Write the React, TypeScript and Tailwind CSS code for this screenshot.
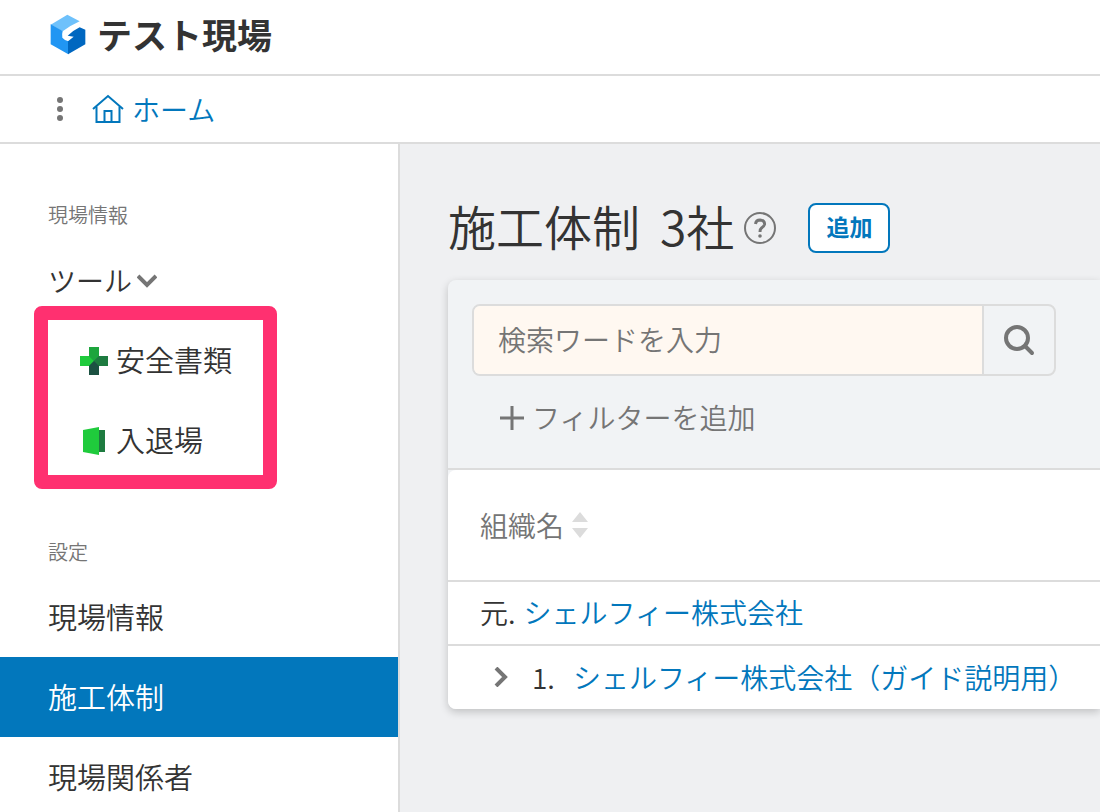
import type { ReactNode } from "react";

function Logo() {
    return (
        <svg viewBox="60 40 108 123" className="w-9 h-[41px]" aria-hidden="true">
            <path d="M62 72 L112 42 L149 62 Q122 74 98 92 Z" fill="#6ec1fb" />
            <path d="M62 71 L98 91 Q95 102 97 111 Q104 119 115 122 V161 L62 131 Z" fill="#2196f3" />
            <path d="M113 105 Q130 89 149 80 L166 87 V131 L114 161 V122 L131 108 Z" fill="#0067c0" />
        </svg>
    );
}

function HomeIcon() {
    return (
        <svg viewBox="0 0 32 30" className="w-8 h-[30px]" fill="none" stroke="currentColor" strokeWidth="2" aria-hidden="true">
            <path d="M1 15 L16 2 L31 15" />
            <path d="M4.500 12.500 V28 H27.500 V12.500" />
            <path d="M12.500 28 V17 H19.500 V28" />
        </svg>
    );
}

function SafetyIcon() {
    return (
        <svg viewBox="0 0 28 28" className="w-7 h-7" aria-hidden="true">
            <path d="M9 9 H19 V19 H9 Z" fill="#1e7b40" />
            <path d="M9 0 H19 V9 L14 14 L9 9 Z" fill="#1da53d" />
            <path d="M0 9 H9 L14 14 L9 19 H0 Z" fill="#1fcb3c" />
            <path d="M28 9 H19 L14 14 L19 19 H28 Z" fill="#1e7b40" />
            <path d="M9 28 V19 L14 14 L19 19 V28 Z" fill="#1c5142" />
        </svg>
    );
}

function GateIcon() {
    return (
        <svg viewBox="0 0 28 28" className="w-7 h-7" aria-hidden="true">
            <path d="M19 3 H25 V25 H19 Z" fill="#1e7b40" />
            <path d="M3 3 L19 0 V28 L3 25 Z" fill="#1fcb3c" />
        </svg>
    );
}

function Chevron({ className }: { className: string }) {
    return (
        <svg viewBox="0 0 20 20" className={className} fill="none" stroke="#757575" strokeWidth="4" aria-hidden="true">
            <path d="M1 6 L10 15 L19 6" />
        </svg>
    );
}

function SideLink({ children, active }: { children: ReactNode; active?: boolean }) {
    return (
        <a
            href="#"
            className={
                active
                    ? "flex items-center h-20 px-12 text-[29px] bg-[#0277bc] text-white"
                    : "flex items-center h-20 px-12 text-[29px]"
            }
        >
            {children}
        </a>
    );
}

export default function App() {
    return (
        <div className="min-h-screen flex flex-col overflow-x-hidden bg-white text-[#333] font-[350] font-['Noto_Sans_CJK_JP',sans-serif]">
            <header className="flex items-center gap-[11px] h-19 px-[50px] pb-1.5 border-b-2 border-[#dcdcdc]">
                <Logo />
                <span className="pb-0.5 text-[35px] leading-none font-bold">テスト現場</span>
            </header>
            <nav className="flex items-center gap-[22px] h-17 px-[50px] border-b-2 border-[#dcdcdc]">
                <button aria-label="メニュー">
                    <svg viewBox="0 0 20 26" className="w-5 h-[26px]" fill="#757575" aria-hidden="true">
                        <circle cx="10" cy="4" r="3" />
                        <circle cx="10" cy="13" r="3" />
                        <circle cx="10" cy="22" r="3" />
                    </svg>
                </button>
                <a href="#" className="flex items-center gap-2 text-[28px] leading-none text-[#0277bc]">
                    <HomeIcon />
                    ホーム
                </a>
            </nav>

            <div className="flex flex-1">
                <aside className="w-100 shrink-0 border-r-2 border-[#dcdcdc] pt-12">
                    <h2 className="flex items-center h-12 px-12 pb-0.5 text-xl text-[#757575]">現場情報</h2>
                    <button className="flex items-center gap-[5px] h-20 px-12 text-[28px]">
                        ツール
                        <Chevron className="w-5 h-5" />
                    </button>
                    <div className="relative pt-px">
                        <a href="#" className="flex items-center gap-2 h-20 px-20 text-[29px]">
                            <SafetyIcon />
                            <span className="pb-0.5">安全書類</span>
                        </a>
                        <a href="#" className="flex items-center gap-2 h-20 px-20 text-[29px]">
                            <GateIcon />
                            <span className="pb-0.5">入退場</span>
                        </a>
                        <div className="absolute -top-[14px] left-[34px] w-[243px] h-[183px] border-14 border-[#ff3070] rounded-lg pointer-events-none" />
                    </div>
                    <h2 className="flex items-center h-12 mt-12 px-12 pb-0.5 text-xl text-[#757575]">設定</h2>
                    <SideLink>現場情報</SideLink>
                    <SideLink active>施工体制</SideLink>
                    <SideLink>現場関係者</SideLink>
                </aside>

                <main className="flex-1 min-w-0 bg-[#eff0f2] pl-12 pt-12">
                    <div className="flex items-center h-18">
                        <h1 className="flex gap-5 pb-1.5 text-5xl">
                            <span>施工体制</span>
                            <span>3社</span>
                        </h1>
                        <svg viewBox="0 0 32 32" className="w-8 h-8 ml-2.5" fill="none" stroke="#757575" aria-hidden="true">
                            <circle cx="16" cy="16" r="15" strokeWidth="2" />
                            <path d="M11.500 12 Q12 8 16 8 Q21 8.500 20.500 12.500 Q20 14.500 17.500 16 Q16 17 16 20" strokeWidth="3" />
                            <circle cx="16" cy="24" r="1.800" fill="#757575" stroke="none" />
                        </svg>
                        <button className="ml-8 h-[50px] px-4 pb-1 bg-white border-2 border-[#0277bc] rounded-lg text-[23px] leading-none font-bold text-[#0277bc]">
                            追加
                        </button>
                    </div>

                    <section className="mt-4 rounded-l-lg bg-[#f1f3f5] shadow-[0_3px_8px_rgba(0,0,0,0.2)]">
                        <div className="h-[190px] px-6 pt-6 border-b-2 border-[#dcdcdc]">
                            <form className="flex h-18 max-w-[584px] border-2 border-[#dcdcdc] rounded-lg overflow-hidden">
                                <input
                                    type="text"
                                    aria-label="検索ワード"
                                    placeholder="検索ワードを入力"
                                    className="flex-1 min-w-0 px-6 pb-0.5 bg-[#fff8f1] text-[28px] placeholder:text-[#757575]"
                                />
                                <button type="button" aria-label="検索" className="w-18 border-l-2 border-[#dcdcdc] flex items-center justify-center">
                                    <svg viewBox="0 0 32 32" className="w-8 h-8" fill="none" stroke="#757575" strokeWidth="4" strokeLinecap="round" aria-hidden="true">
                                        <circle cx="14" cy="14" r="11" />
                                        <path d="M22 22 L29 29" />
                                    </svg>
                                </button>
                            </form>
                            <button className="flex items-center gap-2 h-17 mt-2 px-7 text-[28px] text-[#757575]">
                                <svg viewBox="0 0 24 24" className="w-6 h-6" stroke="#757575" strokeWidth="3" aria-hidden="true">
                                    <path d="M0 12 H24 M12 0 V24" />
                                </svg>
                                <span className="pb-0.5">フィルターを追加</span>
                            </button>
                        </div>
                        <table className="w-full bg-white rounded-l-lg text-[28px] leading-none">
                            <thead>
                                <tr className="h-[111px] border-b-2 border-[#dcdcdc]">
                                    <th className="px-8 text-left font-[350] text-[#757575]">
                                        <span className="flex items-center gap-2">
                                            組織名
                                            <svg viewBox="0 0 16 26" className="w-4 h-[26px]" fill="#dcdcdc" aria-hidden="true">
                                                <path d="M8 0 L16 10 H0 Z M8 26 L16 16 H0 Z" />
                                            </svg>
                                        </span>
                                    </th>
                                </tr>
                            </thead>
                            <tbody>
                                <tr className="h-16 border-b-2 border-[#dcdcdc]">
                                    <td className="px-8 pb-0.5">
                                        <div className="flex gap-2 whitespace-nowrap">
                                            <span>元.</span>
                                            <a href="#" className="text-[#0277bc]">シェルフィー株式会社</a>
                                        </div>
                                    </td>
                                </tr>
                                <tr className="h-16">
                                    <td className="px-8 pb-0.5">
                                        <div className="flex items-center whitespace-nowrap">
                                            <button aria-label="開く" className="ml-2.5 mr-[22px]">
                                                <Chevron className="w-5 h-5 -rotate-90" />
                                            </button>
                                            <span className="mr-[18px]">1.</span>
                                            <a href="#" className="text-[#0277bc]">シェルフィー株式会社（ガイド説明用）</a>
                                        </div>
                                    </td>
                                </tr>
                            </tbody>
                        </table>
                    </section>
                </main>
            </div>
        </div>
    );
}
